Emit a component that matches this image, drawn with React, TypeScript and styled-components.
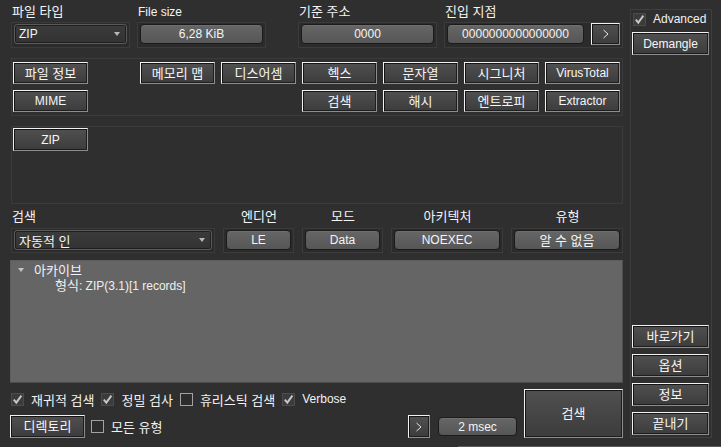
import React from "react";
import styled, { createGlobalStyle } from "styled-components";

const Global = createGlobalStyle`
  html, body { margin: 0; padding: 0; background: #2f2f2f; }
  body {
    font-family: "Liberation Sans", "Noto Sans CJK KR", sans-serif;
    font-size: 12px;
    color: #f2f2f2;
  }
  * { box-sizing: border-box; }
`;

/* Korean glyphs render a touch larger in the original UI font */
const Ko = styled.span`
  font-size: 13px;
`;

const Window = styled.div`
  width: 721px;
  height: 447px;
  background: #2f2f2f;
  display: flex;
  flex-direction: column;
  overflow: hidden;
`;

const Body = styled.div`
  flex: 1;
  display: flex;
  gap: 7px;
  padding-left: 10px;
`;

const Main = styled.div`
  width: 613px;
  display: flex;
  flex-direction: column;
  padding-top: 4px;
`;

const Side = styled.div`
  width: 82px;
  height: 429px;
  margin-top: 9px;
  border: 1px solid #3e3e3e;
  padding: 1px 1px 2px 1px;
  display: flex;
  flex-direction: column;
`;

const SideStack = styled.div`
  margin-top: auto;
  display: flex;
  flex-direction: column;
  gap: 6px;
`;

const FooterLine = styled.div`
  height: 1px;
  margin-left: 458px;
  background: #5c5c5c;
`;

/* ---------- top fields ---------- */
const TopRow = styled.div`
  display: flex;
  align-items: flex-start;
`;

const FieldGroup = styled.div<{ $w: number; $ml: number }>`
  width: ${(p) => p.$w}px;
  margin-left: ${(p) => p.$ml}px;
  display: flex;
  flex-direction: column;
`;

const Label = styled.div<{ $h?: number; $center?: boolean }>`
  height: ${(p) => p.$h ?? 18}px;
  line-height: ${(p) => (p.$h ?? 18) - 2}px;
  padding-left: 1px;
  white-space: nowrap;
  color: #f4f4f4;
  text-align: ${(p) => (p.$center ? "center" : "left")};
`;

const Frame = styled.div<{ $h?: number }>`
  height: ${(p) => p.$h ?? 26}px;
  border: 1px solid #3b3b3b;
  background: #2b2b2b;
  padding: 1px 2px;
  display: flex;
  align-items: flex-start;
  gap: 7px;
`;

const ValueField = styled.div<{ $w?: number; $h?: number }>`
  ${(p) => (p.$w ? `width: ${p.$w}px; flex: none;` : "flex: 1;")}
  height: ${(p) => p.$h ?? 20}px;
  border: 1px solid #1b1b1b;
  border-radius: 4px;
  background: linear-gradient(#666666, #565656);
  box-shadow: inset 0 1px 0 rgba(255, 255, 255, 0.07);
  color: #f4f4f4;
  display: flex;
  align-items: center;
  justify-content: center;
  white-space: nowrap;
  line-height: 1;
`;

const Combo = styled.div`
  flex: 1;
  height: 20px;
  border: 1px solid #5a5a5a;
  border-radius: 3px;
  background: linear-gradient(#3b3b3b, #323232);
  box-shadow: inset 0 0 0 1px #1f1f1f;
  display: flex;
  align-items: center;
  padding: 0 6px 0 4px;
  color: #f4f4f4;
  white-space: nowrap;
`;

const ComboText = styled.span`
  flex: 1;
`;

const DownArrow = styled.span<{ $color?: string }>`
  width: 0;
  height: 0;
  border-left: 3.5px solid transparent;
  border-right: 3.5px solid transparent;
  border-top: 4px solid ${(p) => p.$color ?? "#b8b8b8"};
  flex: none;
`;

/* ---------- buttons ---------- */
const Btn = styled.button<{ $w?: number; $h?: number; $col?: number }>`
  ${(p) => (p.$w ? `width: ${p.$w}px;` : "")}
  height: ${(p) => p.$h ?? 22}px;
  ${(p) => (p.$col ? `grid-column: ${p.$col};` : "")}
  flex: none;
  margin: 0;
  padding: 0;
  font: inherit;
  color: #f6f6f6;
  border: 1px solid;
  border-color: #f2f2f2 #8c8c8c #8c8c8c #f2f2f2;
  box-shadow: inset 1px 1px 0 #151515, inset -1px -1px 0 #1e1e1e;
  background: linear-gradient(#505050, #3c3c3c);
  display: flex;
  align-items: center;
  justify-content: center;
  white-space: nowrap;
  line-height: 1;
`;

const ButtonFrame = styled.div`
  margin-top: 10px;
  margin-left: 1px;
  width: 612px;
  border: 1px solid #3b3b3b;
  padding: 3px 1px;
  display: grid;
  grid-template-columns: 75px 40px repeat(6, 75px);
  grid-template-rows: 22px 22px;
  column-gap: 6px;
  row-gap: 6px;
`;

const TypeFrame = styled.div`
  margin-top: 10px;
  margin-left: 1px;
  width: 612px;
  height: 78px;
  border: 1px solid #3b3b3b;
  padding: 1px;
`;

/* ---------- second row ---------- */
const InfoRow = styled.div`
  margin-top: 3px;
  margin-left: 1px;
  display: grid;
  grid-template-columns: 204px 71px 81px 112px 112px;
  column-gap: 8px;
`;

const InfoCol = styled.div`
  display: flex;
  flex-direction: column;
`;

/* ---------- tree ---------- */
const Tree = styled.div`
  margin-top: 7px;
  width: 613px;
  height: 123px;
  background: #656565;
  border: 1px solid #5d5d5d;
  border-bottom-color: #4b4b4b;
  border-right-color: #4f4f4f;
  padding-top: 1px;
`;

const TreeRow = styled.div<{ $indent: number }>`
  height: 15px;
  display: flex;
  align-items: center;
  padding-left: ${(p) => p.$indent}px;
  gap: 10px;
  white-space: nowrap;
`;

const TreeText = styled.span<{ $color: string }>`
  color: ${(p) => p.$color};
`;

/* ---------- bottom ---------- */
const Bottom = styled.div`
  margin-top: 6px;
  height: 49px;
  display: grid;
  grid-template-columns: 1fr 99px;
  column-gap: 7px;
`;

const BottomLeft = styled.div`
  display: flex;
  flex-direction: column;
  justify-content: space-between;
`;

const CheckRow = styled.div`
  height: 20px;
  display: flex;
  align-items: center;
  gap: 7px;
  padding-left: 1px;
`;

const ActionRow = styled.div`
  height: 23px;
  display: flex;
  align-items: center;
`;

const Push = styled.div`
  margin-left: auto;
  display: flex;
  align-items: center;
  gap: 8px;
`;

const CheckItem = styled.label<{ $ml?: number }>`
  display: flex;
  align-items: center;
  gap: 7px;
  margin-left: ${(p) => p.$ml ?? 0}px;
  white-space: nowrap;
  color: #f2f2f2;
`;

const Box = styled.span<{ $on: boolean }>`
  width: 13px;
  height: 13px;
  flex: none;
  border: 1px solid ${(p) => (p.$on ? "#4c4c4c" : "#a2a2a2")};
  background: ${(p) => (p.$on ? "#3b3b3b" : "#2c2c2c")};
  display: flex;
  align-items: center;
  justify-content: center;
`;

const AdvancedRow = styled.div`
  height: 14px;
  margin: 1px 0 6px 1px;
  display: flex;
  align-items: center;
`;

const Check: React.FC<{ on: boolean; label: React.ReactNode; ml?: number }> = ({ on, label, ml }) => (
  <CheckItem $ml={ml}>
    <Box $on={on}>
      {on && (
        <svg width="11" height="11" viewBox="0 0 11 11">
          <path d="M1.8 5.6 L4.3 8.6 L9.4 1.6" stroke="#c9c9c9" strokeWidth="1.9" fill="none" />
        </svg>
      )}
    </Box>
    <span>{label}</span>
  </CheckItem>
);

const Chevron = () => (
  <svg width="8" height="10" viewBox="0 0 8 10">
    <path d="M1.5 1 L6 5 L1.5 9" stroke="#e8e8e8" strokeWidth="1" fill="none" />
  </svg>
);

export default function App() {
  return (
    <Window>
      <Global />
      <Body>
        <Main>
          <TopRow>
            <FieldGroup $w={119} $ml={1}>
              <Label><Ko>파일 타입</Ko></Label>
              <Frame>
                <Combo>
                  <ComboText>ZIP</ComboText>
                  <DownArrow />
                </Combo>
              </Frame>
            </FieldGroup>
            <FieldGroup $w={129} $ml={7}>
              <Label>File size</Label>
              <Frame>
                <ValueField>6,28 KiB</ValueField>
              </Frame>
            </FieldGroup>
            <FieldGroup $w={139} $ml={32}>
              <Label><Ko>기준 주소</Ko></Label>
              <Frame>
                <ValueField>0000</ValueField>
              </Frame>
            </FieldGroup>
            <FieldGroup $w={179} $ml={7}>
              <Label><Ko>진입 지점</Ko></Label>
              <Frame>
                <ValueField $w={137}>0000000000000000</ValueField>
                <Btn $w={29} style={{ marginTop: -1 }}>
                  <Chevron />
                </Btn>
              </Frame>
            </FieldGroup>
          </TopRow>

          <ButtonFrame>
            <Btn $col={1}><Ko>파일 정보</Ko></Btn>
            <Btn $col={3}><Ko>메모리 맵</Ko></Btn>
            <Btn $col={4}><Ko>디스어셈</Ko></Btn>
            <Btn $col={5}><Ko>헥스</Ko></Btn>
            <Btn $col={6}><Ko>문자열</Ko></Btn>
            <Btn $col={7}><Ko>시그니처</Ko></Btn>
            <Btn $col={8}>VirusTotal</Btn>
            <Btn $col={1}>MIME</Btn>
            <Btn $col={5}><Ko>검색</Ko></Btn>
            <Btn $col={6}><Ko>해시</Ko></Btn>
            <Btn $col={7}><Ko>엔트로피</Ko></Btn>
            <Btn $col={8}>Extractor</Btn>
          </ButtonFrame>

          <TypeFrame>
            <Btn $w={75} $h={23}>ZIP</Btn>
          </TypeFrame>

          <InfoRow>
            <InfoCol>
              <Label $h={21}><Ko>검색</Ko></Label>
              <Frame $h={25}>
                <Combo>
                  <ComboText><Ko>자동적 인</Ko></ComboText>
                  <DownArrow />
                </Combo>
              </Frame>
            </InfoCol>
            <InfoCol>
              <Label $h={21} $center><Ko>엔디언</Ko></Label>
              <Frame $h={25}>
                <ValueField>LE</ValueField>
              </Frame>
            </InfoCol>
            <InfoCol>
              <Label $h={21} $center><Ko>모드</Ko></Label>
              <Frame $h={25}>
                <ValueField>Data</ValueField>
              </Frame>
            </InfoCol>
            <InfoCol>
              <Label $h={21} $center><Ko>아키텍처</Ko></Label>
              <Frame $h={25}>
                <ValueField>NOEXEC</ValueField>
              </Frame>
            </InfoCol>
            <InfoCol>
              <Label $h={21} $center><Ko>유형</Ko></Label>
              <Frame $h={25}>
                <ValueField><Ko>알 수 없음</Ko></ValueField>
              </Frame>
            </InfoCol>
          </InfoRow>

          <Tree>
            <TreeRow $indent={7}>
              <DownArrow $color="#c4c4c4" />
              <TreeText $color="#eef0ff"><Ko>아카이브</Ko></TreeText>
            </TreeRow>
            <TreeRow $indent={44}>
              <TreeText $color="#f0f0f0"><Ko>형식</Ko>: ZIP(3.1)[1 records]</TreeText>
            </TreeRow>
          </Tree>

          <Bottom>
            <BottomLeft>
              <CheckRow>
                <Check on label={<Ko>재귀적 검색</Ko>} />
                <Check on label={<Ko>정밀 검사</Ko>} />
                <Check on={false} label={<Ko>휴리스틱 검색</Ko>} />
                <Check on label="Verbose" />
              </CheckRow>
              <ActionRow>
                <Btn $w={75} $h={23}><Ko>디렉토리</Ko></Btn>
                <Check on={false} label={<Ko>모든 유형</Ko>} ml={6} />
                <Push>
                  <Btn $w={22} $h={23}>
                    <Chevron />
                  </Btn>
                  <ValueField $w={79} $h={19}>2 msec</ValueField>
                </Push>
              </ActionRow>
            </BottomLeft>
            <Btn $h={49}><Ko>검색</Ko></Btn>
          </Bottom>
        </Main>

        <Side>
          <AdvancedRow>
            <Check on label="Advanced" />
          </AdvancedRow>
          <Btn $w={77} $h={23}>Demangle</Btn>
          <SideStack>
            <Btn $w={77} $h={23}><Ko>바로가기</Ko></Btn>
            <Btn $w={77} $h={23}><Ko>옵션</Ko></Btn>
            <Btn $w={77} $h={23}><Ko>정보</Ko></Btn>
            <Btn $w={77} $h={23}><Ko>끝내기</Ko></Btn>
          </SideStack>
        </Side>
      </Body>
      <FooterLine />
    </Window>
  );
}
